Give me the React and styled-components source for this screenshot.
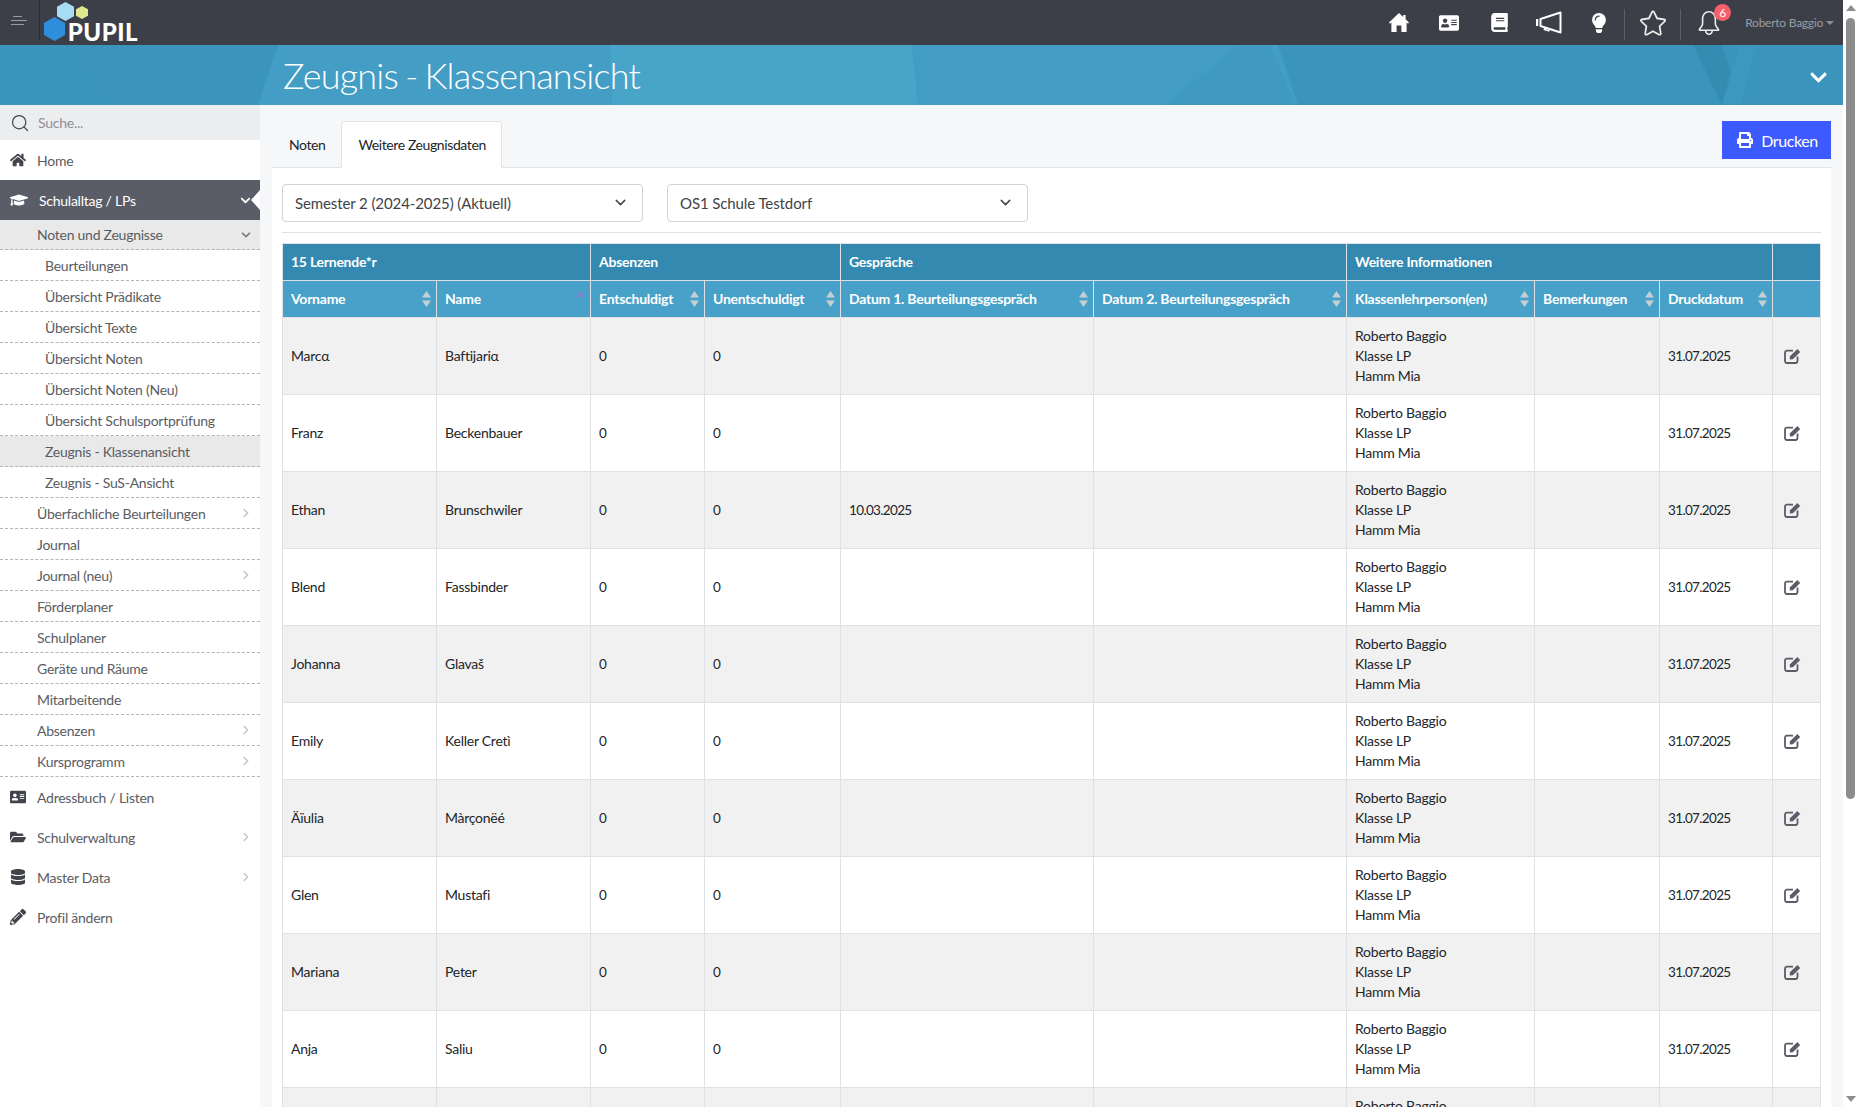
import React from "react";
import styled, { createGlobalStyle } from "styled-components";
import {
  FaHome,
  FaGraduationCap,
  FaAddressCard,
  FaFolderOpen,
  FaDatabase,
  FaPencilAlt,
  FaPrint,
  FaBook,
  FaLightbulb,
  FaChevronDown,
  FaChevronRight,
} from "react-icons/fa";
import { SlStar, SlBell } from "react-icons/sl";
import { Search, ChevronDown } from "lucide-react";

const GlobalStyle = createGlobalStyle`
  html, body {
    margin: 0;
    padding: 0;
    height: 100%;
    overflow: hidden;
    background: #fff;
    font-family: "Lato", "Noto Sans", sans-serif;
    font-size: 14px;
    letter-spacing: -0.25px;
    color: #212529;
  }
  #root { height: 100%; }
  * { box-sizing: border-box; }
`;

const teachers = ["Roberto Baggio", "Klasse LP", "Hamm Mia"];

const students = [
  { first: "Marcα", last: "Baftijariα" },
  { first: "Franz", last: "Beckenbauer" },
  { first: "Ethan", last: "Brunschwiler", talk: "10.03.2025" },
  { first: "Blend", last: "Fassbinder" },
  { first: "Johanna", last: "Glavaš" },
  { first: "Emily", last: "Keller Cretì" },
  { first: "Äïulia", last: "Màrçonëé" },
  { first: "Glen", last: "Mustafi" },
  { first: "Mariana", last: "Peter" },
  { first: "Anja", last: "Saliu" },
  { first: "", last: "" },
];

const subItems = [
  { label: "Beurteilungen", deep: true },
  { label: "Übersicht Prädikate", deep: true },
  { label: "Übersicht Texte", deep: true },
  { label: "Übersicht Noten", deep: true },
  { label: "Übersicht Noten (Neu)", deep: true },
  { label: "Übersicht Schulsportprüfung", deep: true },
  { label: "Zeugnis - Klassenansicht", deep: true, active: true },
  { label: "Zeugnis - SuS-Ansicht", deep: true },
  { label: "Überfachliche Beurteilungen", more: true },
  { label: "Journal" },
  { label: "Journal (neu)", more: true },
  { label: "Förderplaner" },
  { label: "Schulplaner" },
  { label: "Geräte und Räume" },
  { label: "Mitarbeitende" },
  { label: "Absenzen", more: true },
  { label: "Kursprogramm", more: true },
];

const columns = [
  { label: "Vorname", width: 154 },
  { label: "Name", width: 154, sorted: true },
  { label: "Entschuldigt", width: 114 },
  { label: "Unentschuldigt", width: 136 },
  { label: "Datum 1. Beurteilungsgespräch", width: 253 },
  { label: "Datum 2. Beurteilungsgespräch", width: 253 },
  { label: "Klassenlehrperson(en)", width: 188 },
  { label: "Bemerkungen", width: 125 },
  { label: "Druckdatum", width: 113 },
  { label: "", width: 48, plain: true },
];

const Shell = styled.div`
  display: flex;
  height: 100vh;
  overflow: hidden;
`;

const Viewport = styled.div`
  flex: 1;
  min-width: 0;
  display: flex;
  flex-direction: column;
`;

const TopBar = styled.header`
  flex: none;
  height: 45px;
  background: #3c3f48;
  display: flex;
  align-items: center;
`;

const MenuToggle = styled.div`
  width: 40px;
  height: 40px;
  align-self: flex-start;
  border-right: 1px solid #2c2e35;
  display: flex;
  align-items: center;
  justify-content: center;
  padding-top: 2px;
  padding-right: 1px;
`;

const Logo = styled.div`
  display: grid;
  width: 95px;
  height: 45px;
  margin-left: 3px;
`;

const LogoMark = styled.svg`
  grid-area: 1 / 1;
  width: 46px;
  height: 45px;
`;

const LogoText = styled.span`
  grid-area: 1 / 1;
  justify-self: end;
  align-self: end;
  color: #fff;
  font-size: 24px;
  font-weight: 900;
  line-height: 26px;
  letter-spacing: 0.5px;
`;

const TopActions = styled.nav`
  margin-left: auto;
  display: flex;
  align-items: center;
  color: #fff;
`;

const TopIcon = styled.span`
  width: 50px;
  display: flex;
  justify-content: center;
  align-items: center;
  font-size: ${(p) => p.$size || 20}px;
`;

const TopSep = styled.span`
  width: 1px;
  height: 31px;
  margin: 4px 0 0;
  background: #5c5f67;
`;

const BoxedIcon = styled.span`
  width: 55px;
  display: flex;
  justify-content: center;
  align-items: center;
  font-size: 26px;
  color: #eee;
`;

const BellWrap = styled.span`
  position: relative;
  width: 55px;
  display: flex;
  justify-content: center;
  font-size: 24px;
  color: #eee;
`;

const Badge = styled.span`
  position: absolute;
  top: -7px;
  right: 5px;
  width: 17px;
  height: 17px;
  border-radius: 50%;
  background: #f7606a;
  color: #fff;
  font-size: 12px;
  line-height: 17px;
  text-align: center;
`;

const UserName = styled.span`
  display: flex;
  align-items: center;
  gap: 3px;
  margin: 0 9px 0 9px;
  color: #9a9ca4;
  font-size: 12px;
  &::after {
    content: "";
    border-left: 4px solid transparent;
    border-right: 4px solid transparent;
    border-top: 4px solid #8d8f97;
  }
`;

const Banner = styled.div`
  position: relative;
  flex: none;
  height: 60px;
  background: #3a94bb;
  display: flex;
  align-items: center;
  justify-content: space-between;
  padding: 0 15px 0 283px;
  color: #fff;
  overflow: hidden;
`;

const BannerArt = styled.svg`
  position: absolute;
  inset: 0;
  width: 100%;
  height: 100%;
`;

const BannerTitle = styled.h1`
  position: relative;
  margin: 0;
  font-size: 36px;
  font-weight: 300;
  line-height: 48px;
  letter-spacing: -0.8px;
  word-spacing: -2px;
`;

const BannerToggle = styled.span`
  position: relative;
  display: flex;
  font-size: 19px;
  margin-top: 4px;
`;

const Body = styled.div`
  flex: 1;
  min-height: 0;
  display: flex;
`;

const Sidebar = styled.aside`
  flex: none;
  width: 260px;
  background: #fff;
  color: #5a5c63;
`;

const SearchRow = styled.div`
  height: 35px;
  background: #ecedef;
  display: flex;
  align-items: center;
  gap: 8px;
  padding-left: 10px;
  color: #44464d;
  font-size: 14px;
  span {
    color: #8e9096;
  }
`;

const MenuItem = styled.div`
  position: relative;
  height: 40px;
  display: flex;
  align-items: center;
  padding: 0 9px 0 10px;
  font-size: 14px;
  background: ${(p) => (p.$open ? "#5a5d68" : "transparent")};
  color: ${(p) => (p.$open ? "#fff" : "#5a5c63")};
  ${(p) =>
    p.$open &&
    `&::after {
      content: "";
      position: absolute;
      right: 0;
      top: 10px;
      border-top: 10px solid transparent;
      border-bottom: 10px solid transparent;
      border-right: 9px solid #fff;
    }`}
`;

const MenuIcon = styled.span`
  flex: none;
  width: ${(p) => (p.$light ? 29 : 27)}px;
  display: flex;
  font-size: 16px;
  color: ${(p) => (p.$light ? "#fff" : "#42444c")};
`;

const MenuLabel = styled.span`
  flex: 1;
`;

const MoreIcon = styled.span`
  display: flex;
  font-size: ${(p) => p.$size || 10}px;
  color: ${(p) => p.$color || "#c9c9c9"};
`;

const SubItem = styled.div`
  height: 31px;
  display: flex;
  align-items: center;
  padding: 0 9px 0 ${(p) => (p.$deep ? 45 : 37)}px;
  border-bottom: 1px dashed #b4b4b4;
  font-size: 14px;
  background: ${(p) => (p.$active ? "#e9e9e9" : "transparent")};
`;

const SubHead = styled(SubItem)`
  height: 30px;
  background: #e9e9e9;
`;

const Main = styled.main`
  flex: 1;
  min-width: 0;
  background: #f6f7f9;
  padding: 16px 12px 0;
  overflow: hidden;
`;

const TabBar = styled.div`
  height: 47px;
  display: flex;
  align-items: flex-start;
  border-bottom: 1px solid #e2e3e5;
`;

const Tab = styled.div`
  height: 47px;
  padding: 0 15px 0 16px;
  display: flex;
  align-items: center;
  font-size: 14px;
  letter-spacing: -0.4px;
  border: 1px solid transparent;
  border-radius: 4px 4px 0 0;
  ${(p) =>
    p.$active &&
    `background: #fff;
     border-color: #e2e3e5;
     border-bottom-color: #fff;`}
`;

const PrintButton = styled.button`
  margin-left: auto;
  width: 109px;
  height: 38px;
  padding: 0 0 0 2px;
  border: 0;
  background: #3d5afe;
  color: #fff;
  font: inherit;
  font-size: 16px;
  letter-spacing: -0.4px;
  display: flex;
  align-items: center;
  justify-content: center;
  gap: 8px;
`;

const Card = styled.section`
  background: #fff;
  padding: 16px 10px 0;
  height: 100%;
`;

const FilterRow = styled.div`
  display: flex;
  gap: 24px;
  padding-bottom: 10px;
  border-bottom: 1px solid #dedfe1;
  margin-bottom: 10px;
`;

const FakeSelect = styled.div`
  width: 361px;
  height: 38px;
  display: flex;
  align-items: center;
  justify-content: space-between;
  padding: 0 13px 1px 12px;
  background: #fff;
  border: 1px solid #ced4da;
  border-radius: 4px;
  font-size: 15px;
  letter-spacing: -0.1px;
  color: #3f4248;
`;

const Table = styled.table`
  width: 1538px;
  table-layout: fixed;
  border-collapse: collapse;
  font-size: 14px;
`;

const GroupCell = styled.th`
  height: 37px;
  padding: 0 8px 2px;
  background: #3389b0;
  color: #fff;
  font-weight: 700;
  text-align: left;
  border: 1px solid #dee2e6;
`;

const HeadCell = styled.th`
  height: 37px;
  padding: 0 5px 0 8px;
  background: #47a1c8;
  color: #fff;
  font-weight: 700;
  text-align: left;
  border: 1px solid #dee2e6;
  white-space: nowrap;
`;

const HeadInner = styled.div`
  display: flex;
  align-items: center;
  justify-content: space-between;
  span {
    margin-top: -2px;
  }
`;

const Row = styled.tr`
  height: 77px;
  background: ${(p) => (p.$odd ? "#f1f1f1" : "#fff")};
`;

const Cell = styled.td`
  padding: 0 8px;
  border: 1px solid #dee2e6;
  line-height: 20px;
  vertical-align: middle;
`;

const NumberCell = styled(Cell)`
  font-size: 13.5px;
  letter-spacing: -0.65px;
`;

const EditCell = styled(Cell)`
  padding-left: 11px;
  svg {
    display: block;
  }
`;

const ScrollTrack = styled.div`
  flex: none;
  width: 15px;
  background: #fff;
  display: flex;
  flex-direction: column;
  align-items: center;
  padding: 5px 0 5px;
`;

const ScrollArrow = styled.span`
  width: 0;
  height: 0;
  border-left: 5px solid transparent;
  border-right: 5px solid transparent;
  ${(p) => (p.$down ? "border-top" : "border-bottom")}: 6px solid #8c8c8c;
`;

const ScrollThumb = styled.div`
  width: 9px;
  height: 781px;
  margin-top: 7px;
  border-radius: 5px;
  background: #8c8c8c;
`;

const ScrollSpacer = styled.div`
  flex: 1;
`;

const Hamburger = () => (
  <svg width="16" height="10" viewBox="0 0 16 10" fill="none" stroke="#9a9ca3" strokeWidth="1">
    <path d="M2 .5h9M0 4.5h16M0 8.5h13" />
  </svg>
);

const HomeGlyph = () => (
  <svg width="20" height="19" viewBox="0 0 20 19" fill="#fff">
    <path d="M10 0l4.2 4V2h2.4v4.3L20 9.6l-1 1.1-1.4-1.3V19h-5.2v-6.5H7.6V19H2.4V9.4L1 10.7 0 9.6z" />
  </svg>
);

const Megaphone = () => (
  <svg width="26" height="23" viewBox="0 0 26 23" fill="none" stroke="#fff" strokeWidth="2">
    <path d="M1 8v7" strokeWidth="2.5" />
    <path d="M4.5 8L24.5 1.5v20L4.5 15z" strokeLinejoin="round" />
    <path d="M9 16.5l-.5 2 5 1.5" strokeWidth="1.6" />
  </svg>
);

const EditGlyph = () => (
  <svg width="17" height="16" viewBox="0 0 17 16">
    <path
      d="M9 2.6H3A1.9 1.9 0 0 0 1 4.5v8.6A1.9 1.9 0 0 0 3 15h8.6a1.9 1.9 0 0 0 1.9-1.9V8.5"
      fill="none"
      stroke="#5a5d68"
      strokeWidth="1.8"
    />
    <path d="M6 8.3L13.3 1l2.9 2.9-7.300 7.300-3.100.3z" fill="#5a5d68" />
  </svg>
);

const SortIcon = ({ sorted }) => (
  <svg width="9" height="16" viewBox="0 0 9 16">
    <path d="M4.5 0L9 6.5H0z" fill={sorted ? "#7c86d6" : "#c6cfd4"} transform={sorted ? "translate(0 -0.5)" : undefined} />
    {!sorted && <path d="M4.5 16L0 9.5h9z" fill="#c6cfd4" />}
  </svg>
);

const App = () => {
  return (
    <Shell>
      <GlobalStyle />
      <Viewport>
        <TopBar>
          <MenuToggle>
            <Hamburger />
          </MenuToggle>
          <Logo>
            <LogoMark viewBox="0 0 46 45">
              <path d="M11.5 17l10.5 6v12l-10.5 6L1 35V23z" fill="#2f8edb" />
              <path d="M22.5 2l8.5 4.7v9.600L22.5 21 14 16.3V6.700z" fill="#a8dcf5" />
              <path d="M39 6l6 3.3v6.400L39 19l-6-3.3V9.300z" fill="#dfe88e" />
            </LogoMark>
            <LogoText>PUPIL</LogoText>
          </Logo>
          <TopActions>
            <TopIcon><HomeGlyph /></TopIcon>
            <TopIcon><FaAddressCard /></TopIcon>
            <TopIcon $size={19}><FaBook /></TopIcon>
            <TopIcon><Megaphone /></TopIcon>
            <TopIcon><FaLightbulb /></TopIcon>
            <TopSep />
            <BoxedIcon><SlStar /></BoxedIcon>
            <TopSep />
            <BellWrap>
              <SlBell />
              <Badge>6</Badge>
            </BellWrap>
            <UserName>Roberto Baggio</UserName>
          </TopActions>
        </TopBar>
        <Banner>
          <BannerArt viewBox="0 0 1843 60" preserveAspectRatio="none">
            <path d="M65 0L102 60H0V0z" fill="#3b96bd" />
            <path d="M278 0h1000l20 60H258z" fill="#439dc4" />
            <path d="M610 0h302l6 60H612z" fill="#49a4ca" />
            <path d="M912 0h330l-80 60H918z" fill="#429cc3" />
            <path d="M1240 0h30l25 60h-130z" fill="#3f99c0" />
            <path d="M1693 0h29l19 60h-19z" fill="#348cb2" />
            <path d="M1739 0h18l-16 60h-19z" fill="#3c98bf" />
          </BannerArt>
          <BannerTitle>Zeugnis - Klassenansicht</BannerTitle>
          <BannerToggle><FaChevronDown /></BannerToggle>
        </Banner>
        <Body>
          <Sidebar>
            <SearchRow>
              <Search size={20} strokeWidth={1.5} />
              <span>Suche...</span>
            </SearchRow>
            <MenuItem>
              <MenuIcon><FaHome /></MenuIcon>
              <MenuLabel>Home</MenuLabel>
            </MenuItem>
            <MenuItem $open>
              <MenuIcon $light><FaGraduationCap size={18} /></MenuIcon>
              <MenuLabel>Schulalltag / LPs</MenuLabel>
              <MoreIcon $size={11} $color="#fff"><FaChevronDown /></MoreIcon>
            </MenuItem>
            <SubHead>
              <MenuLabel>Noten und Zeugnisse</MenuLabel>
              <MoreIcon $size={10} $color="#7a7a7a"><FaChevronDown /></MoreIcon>
            </SubHead>
            {subItems.map((item) => (
              <SubItem key={item.label} $deep={item.deep} $active={item.active}>
                <MenuLabel>{item.label}</MenuLabel>
                {item.more && <MoreIcon><FaChevronRight /></MoreIcon>}
              </SubItem>
            ))}
            <MenuItem>
              <MenuIcon><FaAddressCard /></MenuIcon>
              <MenuLabel>Adressbuch / Listen</MenuLabel>
            </MenuItem>
            <MenuItem>
              <MenuIcon><FaFolderOpen /></MenuIcon>
              <MenuLabel>Schulverwaltung</MenuLabel>
              <MoreIcon><FaChevronRight /></MoreIcon>
            </MenuItem>
            <MenuItem>
              <MenuIcon><FaDatabase /></MenuIcon>
              <MenuLabel>Master Data</MenuLabel>
              <MoreIcon><FaChevronRight /></MoreIcon>
            </MenuItem>
            <MenuItem>
              <MenuIcon><FaPencilAlt /></MenuIcon>
              <MenuLabel>Profil ändern</MenuLabel>
            </MenuItem>
          </Sidebar>
          <Main>
            <TabBar>
              <Tab>Noten</Tab>
              <Tab $active>Weitere Zeugnisdaten</Tab>
              <PrintButton>
                <FaPrint size={16} />
                Drucken
              </PrintButton>
            </TabBar>
            <Card>
              <FilterRow>
                <FakeSelect>
                  Semester 2 (2024-2025) (Aktuell)
                  <ChevronDown size={17} />
                </FakeSelect>
                <FakeSelect>
                  OS1 Schule Testdorf
                  <ChevronDown size={17} />
                </FakeSelect>
              </FilterRow>
              <Table>
                <colgroup>
                  {columns.map((col, i) => (
                    <col key={i} width={col.width} />
                  ))}
                </colgroup>
                <thead>
                  <tr>
                    <GroupCell colSpan={2}>15 Lernende*r</GroupCell>
                    <GroupCell colSpan={2}>Absenzen</GroupCell>
                    <GroupCell colSpan={2}>Gespräche</GroupCell>
                    <GroupCell colSpan={3}>Weitere Informationen</GroupCell>
                    <GroupCell />
                  </tr>
                  <tr>
                    {columns.map((col, i) => (
                      <HeadCell key={i}>
                        <HeadInner>
                          <span>{col.label}</span>
                          {!col.plain && <SortIcon sorted={col.sorted} />}
                        </HeadInner>
                      </HeadCell>
                    ))}
                  </tr>
                </thead>
                <tbody>
                  {students.map((s, i) => (
                    <Row key={i} $odd={i % 2 === 0}>
                      <Cell>{s.first}</Cell>
                      <Cell>{s.last}</Cell>
                      <NumberCell>0</NumberCell>
                      <NumberCell>0</NumberCell>
                      <NumberCell>{s.talk}</NumberCell>
                      <Cell />
                      <Cell>
                        {teachers.map((t) => (
                          <div key={t}>{t}</div>
                        ))}
                      </Cell>
                      <Cell />
                      <NumberCell>31.07.2025</NumberCell>
                      <EditCell><EditGlyph /></EditCell>
                    </Row>
                  ))}
                </tbody>
              </Table>
            </Card>
          </Main>
        </Body>
      </Viewport>
      <ScrollTrack>
        <ScrollArrow />
        <ScrollThumb />
        <ScrollSpacer />
        <ScrollArrow $down />
      </ScrollTrack>
    </Shell>
  );
};

export default App;
